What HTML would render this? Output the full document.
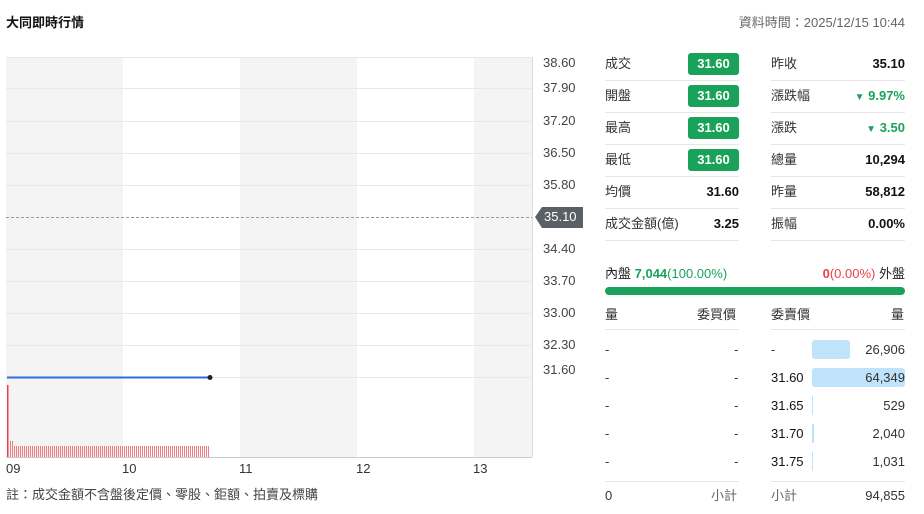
<!DOCTYPE html>
<html><head><meta charset="utf-8"><style>
body{margin:0;width:924px;height:514px;background:#fff;font-family:"Liberation Sans","Noto Sans CJK TC",sans-serif;color:#222;position:relative;overflow:hidden}
.a{position:absolute;white-space:nowrap;line-height:18px}
.t{font-size:13px}
.yl{font-size:13px;color:#444;left:543px}
.row{position:absolute;height:32px;border-bottom:1px solid #e6e6e6}
.lab{position:absolute;left:0;top:0;line-height:32px;font-size:13px;color:#333}
.val{position:absolute;right:0;top:0;line-height:32px;font-size:13px;font-weight:bold;color:#111}
.g{position:absolute;right:0;top:5px;background:#1aa25b;color:#fff;font-weight:bold;font-size:13px;border-radius:3px;width:51px;height:22px;line-height:22px;text-align:center}
.gr{color:#1aa25b}
.ob{font-size:13px;color:#333}
</style></head><body>
<div class="a" style="left:6px;top:14px;font-size:13px;font-weight:bold;color:#111">大同即時行情</div>
<div class="a" style="right:19px;top:14px;font-size:13px;color:#666">資料時間：2025/12/15 10:44</div>

<svg class="a" style="left:0;top:0" width="600" height="460">
<rect x="6" y="57" width="117" height="400" fill="#f4f4f4"/>
<rect x="240" y="57" width="117" height="400" fill="#f4f4f4"/>
<rect x="474" y="57" width="58" height="400" fill="#f4f4f4"/>
<g stroke="#e8e8e8" stroke-width="1">
<line x1="6" y1="57.5" x2="532" y2="57.5"/>
<line x1="6" y1="88.5" x2="532" y2="88.5"/>
<line x1="6" y1="121.5" x2="532" y2="121.5"/>
<line x1="6" y1="153.5" x2="532" y2="153.5"/>
<line x1="6" y1="185.5" x2="532" y2="185.5"/>
<line x1="6" y1="249.5" x2="532" y2="249.5"/>
<line x1="6" y1="281.5" x2="532" y2="281.5"/>
<line x1="6" y1="313.5" x2="532" y2="313.5"/>
<line x1="6" y1="345.5" x2="532" y2="345.5"/>
<line x1="6" y1="377.5" x2="532" y2="377.5"/>
</g>
<line x1="6" y1="217.5" x2="532" y2="217.5" stroke="#999" stroke-dasharray="3,2"/>
<line x1="532.5" y1="57" x2="532.5" y2="457" stroke="#ddd"/>
<line x1="6" y1="457.5" x2="532" y2="457.5" stroke="#ccc"/>
<defs><pattern id="p" x="0" y="0" width="2" height="20" patternUnits="userSpaceOnUse"><rect width="1" height="20" fill="#f07b80"/></pattern></defs>
<rect x="7" y="385" width="1.5" height="72" fill="#e8414a"/>
<rect x="9" y="441" width="4" height="16" fill="url(#p)"/>
<rect x="13" y="446" width="197" height="11" fill="url(#p)"/>
<line x1="7" y1="377.5" x2="210" y2="377.5" stroke="#2a6fdb" stroke-width="2"/>
<circle cx="210" cy="377.5" r="2.5" fill="#222"/>
<polygon points="535,217 542,207 583,207 583,228 542,228" fill="#5b6066"/>
</svg>
<div class="a" style="left:544px;top:208px;font-size:13px;color:#fff">35.10</div>
<div class="a yl" style="top:54px">38.60</div>
<div class="a yl" style="top:79px">37.90</div>
<div class="a yl" style="top:112px">37.20</div>
<div class="a yl" style="top:144px">36.50</div>
<div class="a yl" style="top:176px">35.80</div>
<div class="a yl" style="top:240px">34.40</div>
<div class="a yl" style="top:272px">33.70</div>
<div class="a yl" style="top:304px">33.00</div>
<div class="a yl" style="top:336px">32.30</div>
<div class="a yl" style="top:361px">31.60</div>
<div class="a t" style="left:6px;top:460px;color:#333">09</div>
<div class="a t" style="left:122px;top:460px;color:#333">10</div>
<div class="a t" style="left:239px;top:460px;color:#333">11</div>
<div class="a t" style="left:356px;top:460px;color:#333">12</div>
<div class="a t" style="left:473px;top:460px;color:#333">13</div>
<div class="a" style="left:6px;top:486px;font-size:13px;color:#444">註：成交金額不含盤後定價、零股、鉅額、拍賣及標購</div>

<div class="row" style="left:605px;top:48px;width:134px"><span class="lab">成交</span><span class="g">31.60</span></div>
<div class="row" style="left:605px;top:80px;width:134px"><span class="lab">開盤</span><span class="g">31.60</span></div>
<div class="row" style="left:605px;top:112px;width:134px"><span class="lab">最高</span><span class="g">31.60</span></div>
<div class="row" style="left:605px;top:144px;width:134px"><span class="lab">最低</span><span class="g">31.60</span></div>
<div class="row" style="left:605px;top:176px;width:134px"><span class="lab">均價</span><span class="val">31.60</span></div>
<div class="row" style="left:605px;top:208px;width:134px"><span class="lab">成交金額(億)</span><span class="val">3.25</span></div>
<div class="row" style="left:771px;top:48px;width:134px"><span class="lab">昨收</span><span class="val">35.10</span></div>
<div class="row" style="left:771px;top:80px;width:134px"><span class="lab">漲跌幅</span><span class="val gr"><span style="font-size:10px">▼</span> 9.97%</span></div>
<div class="row" style="left:771px;top:112px;width:134px"><span class="lab">漲跌</span><span class="val gr"><span style="font-size:10px">▼</span> 3.50</span></div>
<div class="row" style="left:771px;top:144px;width:134px"><span class="lab">總量</span><span class="val">10,294</span></div>
<div class="row" style="left:771px;top:176px;width:134px"><span class="lab">昨量</span><span class="val">58,812</span></div>
<div class="row" style="left:771px;top:208px;width:134px"><span class="lab">振幅</span><span class="val">0.00%</span></div>

<div class="a" style="left:605px;top:265px;font-size:13px">內盤 <b class="gr">7,044</b><span class="gr">(100.00%)</span></div>
<div class="a" style="right:19px;top:265px;font-size:13px"><b style="color:#e8414a">0</b><span style="color:#e8414a">(0.00%)</span> 外盤</div>
<div class="a" style="left:605px;top:287px;width:300px;height:8px;border-radius:4px;background:#1aa25b"></div>

<div class="a ob" style="left:605px;top:306px">量</div>
<div class="a ob" style="left:697px;top:306px">委買價</div>
<div class="a ob" style="left:771px;top:306px">委賣價</div>
<div class="a ob" style="left:891px;top:306px">量</div>
<div class="a" style="left:605px;top:329px;width:134px;border-top:1px solid #e6e6e6"></div>
<div class="a" style="left:771px;top:329px;width:134px;border-top:1px solid #e6e6e6"></div>
<div class="a" style="left:605px;top:481px;width:134px;border-top:1px solid #e6e6e6"></div>
<div class="a" style="left:771px;top:481px;width:134px;border-top:1px solid #e6e6e6"></div>

<div class="a" style="left:812px;top:340px;width:38px;height:19px;background:#bfe3fa;border-radius:3px"></div>
<div class="a" style="left:812px;top:368px;width:93px;height:19px;background:#bfe3fa;border-radius:3px"></div>
<div class="a" style="left:812px;top:396px;width:1px;height:19px;background:#bfe3fa"></div>
<div class="a" style="left:812px;top:424px;width:2px;height:19px;background:#bfe3fa"></div>
<div class="a" style="left:812px;top:452px;width:1px;height:19px;background:#bfe3fa"></div>

<div class="a ob" style="left:605px;top:341px">-</div><div class="a ob" style="left:734px;top:341px">-</div><div class="a ob" style="left:771px;top:341px">-</div><div class="a ob" style="right:19px;top:341px">26,906</div>
<div class="a ob" style="left:605px;top:369px">-</div><div class="a ob" style="left:734px;top:369px">-</div><div class="a ob" style="left:771px;top:369px;color:#111">31.60</div><div class="a ob" style="right:19px;top:369px">64,349</div>
<div class="a ob" style="left:605px;top:397px">-</div><div class="a ob" style="left:734px;top:397px">-</div><div class="a ob" style="left:771px;top:397px;color:#111">31.65</div><div class="a ob" style="right:19px;top:397px">529</div>
<div class="a ob" style="left:605px;top:425px">-</div><div class="a ob" style="left:734px;top:425px">-</div><div class="a ob" style="left:771px;top:425px;color:#111">31.70</div><div class="a ob" style="right:19px;top:425px">2,040</div>
<div class="a ob" style="left:605px;top:453px">-</div><div class="a ob" style="left:734px;top:453px">-</div><div class="a ob" style="left:771px;top:453px;color:#111">31.75</div><div class="a ob" style="right:19px;top:453px">1,031</div>
<div class="a ob" style="left:605px;top:487px">0</div><div class="a ob" style="left:711px;top:487px;color:#666">小計</div>
<div class="a ob" style="left:771px;top:487px;color:#666">小計</div><div class="a ob" style="right:19px;top:487px">94,855</div>
</body></html>
